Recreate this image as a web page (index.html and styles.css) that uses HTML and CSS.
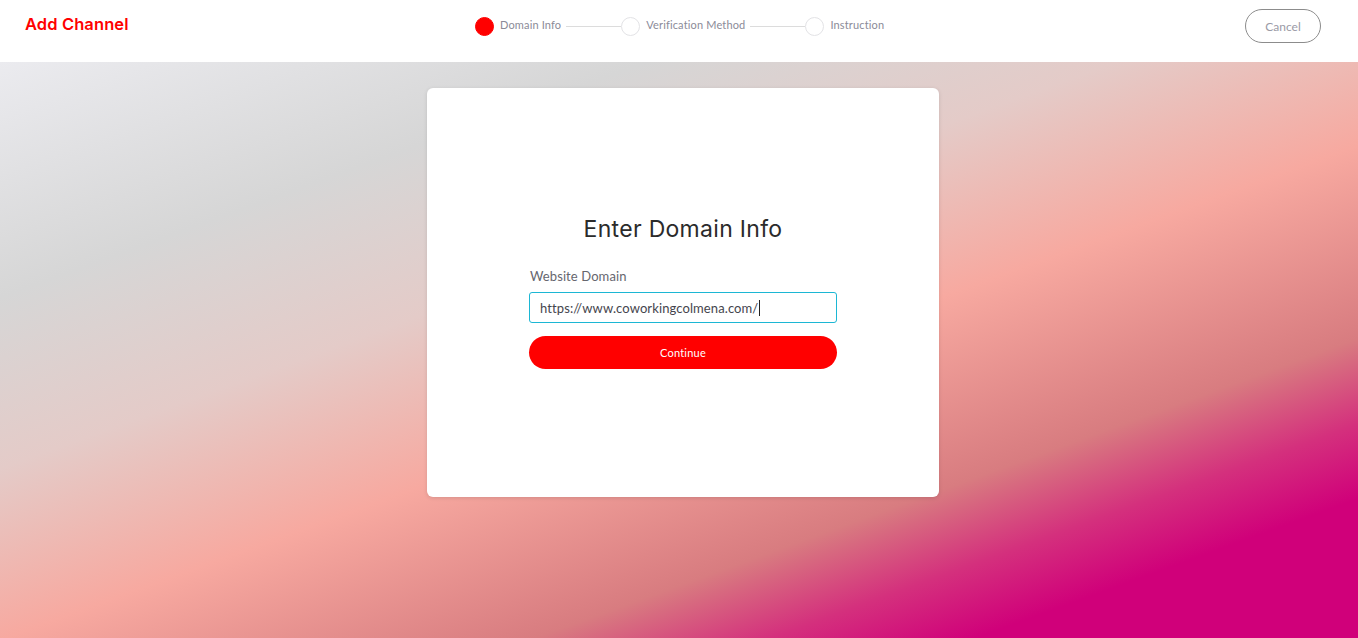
FILE: index.html
```html
<!DOCTYPE html>
<html lang="en">
<head>
<meta charset="utf-8">
<title>Add Channel</title>
<link rel="stylesheet" href="styles.css">
</head>
<body>
<header class="topbar">
  <div class="brand">Add Channel</div>
  <ol class="stepper">
    <li class="step active"><span class="dot"></span><span class="step-label">Domain Info</span></li>
    <li class="connector"></li>
    <li class="step"><span class="dot"></span><span class="step-label">Verification Method</span></li>
    <li class="connector"></li>
    <li class="step"><span class="dot"></span><span class="step-label">Instruction</span></li>
  </ol>
  <button class="cancel" type="button">Cancel</button>
</header>
<main class="stage">
  <section class="card">
    <div class="form">
      <h1 class="title">Enter Domain Info</h1>
      <label class="label" for="domain">Website Domain</label>
      <div class="input"><span class="value">https://www.coworkingcolmena.com/</span><span class="caret"></span></div>
      <button class="primary" type="button">Continue</button>
    </div>
  </section>
</main>
</body>
</html>
```

FILE: styles.css
```css
* { box-sizing: border-box; }
html, body { margin: 0; padding: 0; height: 100%; }
body {
  font-family: "Lato", "Noto Sans", sans-serif;
  display: flex;
  flex-direction: column;
  min-height: 638px;
}
.topbar {
  height: 62px;
  background: #fff;
  display: flex;
  align-items: center;
  padding: 0 37px 0 25px;
  position: relative;
  flex: none;
}
.brand {
  font-family: "Inter", "Liberation Sans", sans-serif;
  font-weight: 600;
  font-size: 16.5px;
  color: #ff0000;
  letter-spacing: 0.1px;
  margin-top: -15px;
  flex: 1;
}
.stepper {
  list-style: none;
  margin: 0;
  padding: 0;
  display: flex;
  align-items: center;
  position: absolute;
  left: 475px;
  top: 17px;
}
.step { display: flex; align-items: center; }
.dot {
  width: 19px;
  height: 19px;
  border-radius: 50%;
  border: 1px solid #e3e3e6;
  background: #fff;
  display: block;
}
.step.active .dot { background: #ff0000; border-color: #ff0000; }
.step-label {
  font-size: 11px;
  color: #8b8b98;
  margin-left: 6px;
  margin-top: -5px;
  letter-spacing: 0.15px;
}
.connector {
  width: 55px;
  height: 1px;
  background: #dcdcdc;
  margin: 0 0 0 5px;
}
.cancel {
  margin-left: auto;
  width: 76px;
  height: 34px;
  border: 1px solid #8c8c8c;
  border-radius: 17px;
  background: #fff;
  color: #9a9aa6;
  font-family: "Lato", sans-serif;
  font-size: 12px;
  margin-top: -10px;
}
.stage {
  flex: 1;
  background: linear-gradient(160deg, #ebebef 0%, #d6d6d6 22%, #e4cbc8 38%, #f7a9a0 54%, #d87c80 72%, #d4307d 80%, #d0007a 87%, #d0007a 100%);
  display: flex;
  justify-content: center;
  padding-top: 26px;
  padding-left: 8px;
}
.card {
  width: 512px;
  height: 409px;
  background: #fff;
  border-radius: 6px;
  box-shadow: 0 1px 4px rgba(0,0,0,0.12);
  display: flex;
  align-items: center;
  justify-content: center;
}
.form {
  width: 308px;
  display: flex;
  flex-direction: column;
  margin-top: -1px;
}
.title {
  font-family: "Inter", "Liberation Sans", sans-serif;
  font-weight: 400;
  font-size: 23px;
  letter-spacing: 0.3px;
  color: #2b2b2b;
  text-align: center;
  margin: 0 0 25px;
}
.label {
  font-size: 13px;
  color: #66666e;
  margin: 0 0 8px 1px;
  letter-spacing: 0.1px;
}
.input {
  height: 31px;
  border: 1px solid #1cb7d4;
  border-radius: 3px;
  display: flex;
  align-items: center;
  padding-left: 10px;
  font-size: 13px;
  letter-spacing: 0.1px;
  color: #45454d;
}
.caret {
  width: 1px;
  height: 16px;
  background: #222;
  margin-left: 1px;
}
.primary {
  margin-top: 13px;
  height: 33px;
  border: none;
  border-radius: 17px;
  background: #ff0000;
  color: #fff;
  font-family: "Lato", sans-serif;
  font-size: 11px;
  letter-spacing: 0.2px;
}
```
